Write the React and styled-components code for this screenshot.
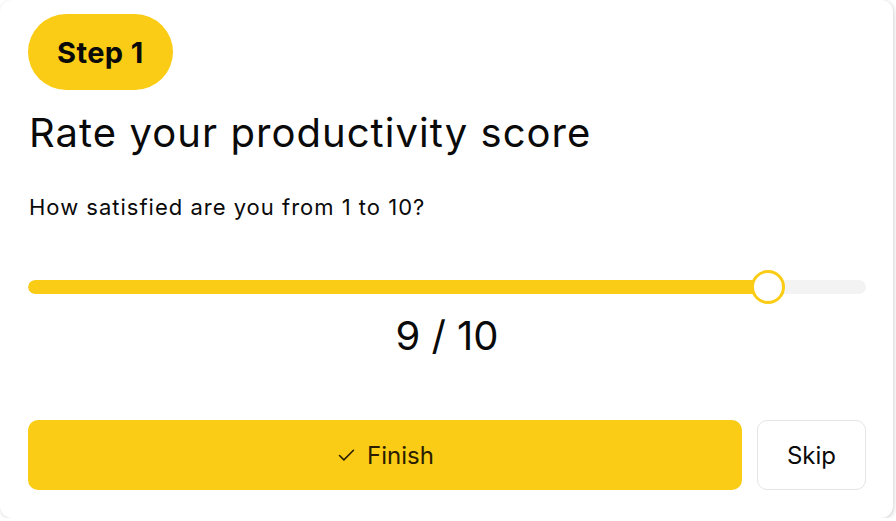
import React from "react";
import styled, { createGlobalStyle } from "styled-components";

const Global = createGlobalStyle`
  html, body { margin: 0; padding: 0; background: #ffffff; }
  body { font-family: Inter, "Noto Sans", sans-serif; color: #0a0a0a; }
`;

const Card = styled.div`
  width: 893px;
  height: 518px;
  box-sizing: border-box;
  background: #ffffff;
  border-radius: 12px;
  box-shadow: 1px 1px 4px rgba(0, 0, 0, 0.18);
  padding: 14px 27px 28px 28px;
  display: flex;
  flex-direction: column;
`;

const Badge = styled.div`
  align-self: flex-start;
  height: 76px;
  padding: 0 29px;
  border-radius: 999px;
  background: #facc15;
  display: flex;
  align-items: center;
  font-weight: 700;
  font-size: 29px;
  letter-spacing: 0.4px;
  color: #0a0a0a;
`;

const Title = styled.h1`
  margin: 19px 0 0 1px;
  font-weight: 400;
  font-size: 40px;
  line-height: 48px;
  letter-spacing: 1.05px;
  color: #0a0a0a;
`;

const Question = styled.p`
  margin: 36px 0 0 1px;
  font-size: 22px;
  line-height: 28px;
  letter-spacing: 1px;
  color: #0a0a0a;
`;

const SliderWrap = styled.div`
  position: relative;
  margin-top: 49px;
  height: 34px;
  display: flex;
  align-items: center;
`;

const Track = styled.div`
  position: relative;
  width: 100%;
  height: 14px;
  border-radius: 7px;
  background: #f3f3f3;
  overflow: hidden;
`;

const Fill = styled.div`
  height: 100%;
  background: #facc15;
  border-radius: 7px 0 0 7px;
`;

const Thumb = styled.div`
  position: absolute;
  top: 0;
  width: 34px;
  height: 34px;
  box-sizing: border-box;
  border: 3px solid #facc15;
  background: #ffffff;
  border-radius: 50%;
  transform: translateX(-50%);
`;

const Value = styled.div`
  margin-top: 8px;
  text-align: center;
  font-size: 40px;
  line-height: 48px;
  color: #0a0a0a;
`;

const Actions = styled.div`
  margin-top: auto;
  display: flex;
  gap: 15px;
`;

const Button = styled.button`
  height: 70px;
  border-radius: 10px;
  font-family: inherit;
  font-size: 24px;
  display: flex;
  align-items: center;
  justify-content: center;
  gap: 10px;
  cursor: pointer;
  flex: ${(p) => (p.$primary ? "1" : "0 0 auto")};
  width: ${(p) => (p.$primary ? "auto" : "109px")};
  background: ${(p) => (p.$primary ? "#facc15" : "#ffffff")};
  border: ${(p) => (p.$primary ? "none" : "1px solid #e5e5e5")};
  color: ${(p) => (p.$primary ? "#2a1d00" : "#0a0a0a")};
`;

const Check = () => (
  <svg width="21" height="21" viewBox="0 0 24 24" fill="none" stroke="currentColor" strokeWidth="1.8" strokeLinecap="round" strokeLinejoin="round">
    <path d="M20 6 9 17l-5-5" />
  </svg>
);

export default function App() {
  const value = 9;
  const pct = 88.3;
  return (
    <>
      <Global />
      <Card>
        <Badge>Step 1</Badge>
        <Title>Rate your productivity score</Title>
        <Question>How satisfied are you from 1 to 10?</Question>
        <SliderWrap>
          <Track>
            <Fill style={{ width: `${pct}%` }} />
          </Track>
          <Thumb style={{ left: `${pct}%` }} />
        </SliderWrap>
        <Value>{value} / 10</Value>
        <Actions>
          <Button $primary>
            <Check />
            Finish
          </Button>
          <Button>Skip</Button>
        </Actions>
      </Card>
    </>
  );
}
